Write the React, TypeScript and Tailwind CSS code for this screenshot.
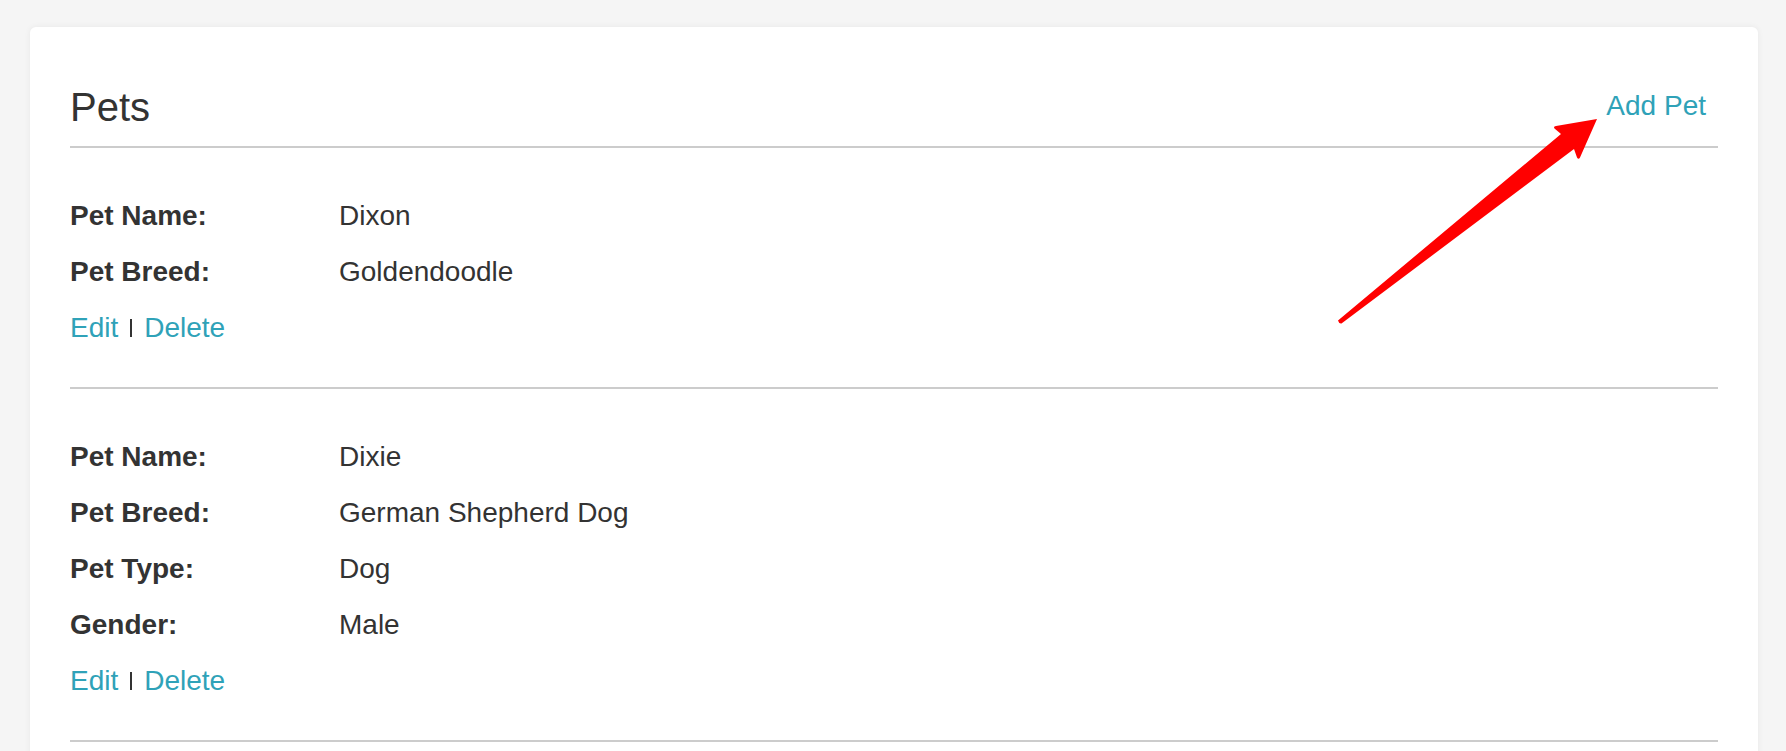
import React from 'react';

type Pet = {
  fields: { label: string; value: string }[];
};

const PETS: Pet[] = [
  {
    fields: [
      { label: 'Pet Name:', value: 'Dixon' },
      { label: 'Pet Breed:', value: 'Goldendoodle' },
    ],
  },
  {
    fields: [
      { label: 'Pet Name:', value: 'Dixie' },
      { label: 'Pet Breed:', value: 'German Shepherd Dog' },
      { label: 'Pet Type:', value: 'Dog' },
      { label: 'Gender:', value: 'Male' },
    ],
  },
];

// 어노테이션 화살표 (빨간색)
function RedArrow() {
  return (
    <svg
      className="absolute left-[1330px] top-[110px] pointer-events-none"
      width="280"
      height="220"
      viewBox="0 0 280 220"
    >
      <path
        d="M8 210.5 L231 24 L224.5 18.5 Q223 16.5 226 16 L267 9 L250 47.5 Q248.5 50 247 47.5 L244 39 L11.5 213.5 Q9 214 8 210.5 Z"
        fill="#ff0000"
      />
    </svg>
  );
}

export default function App() {
  return (
    <div
      className="relative h-screen overflow-hidden bg-[#f5f5f5] pt-[27px] pl-[30px] pr-[28px] text-[#333333]"
      style={{ fontFamily: '"Liberation Sans", Arial, Helvetica, sans-serif' }}
    >
      <div className="rounded-md bg-white px-[40px] pt-[55px] pb-[40px] shadow-[0_0_6px_rgba(0,0,0,0.06)]">
        {/* 헤더 */}
        <div className="flex items-center justify-between border-b-2 border-[#cccccc] pb-[14px]">
          <h1 className="text-[40px] leading-[48px] font-normal">Pets</h1>
          <a href="#" className="mr-[12px] mb-[2px] text-[28px] leading-[48px] text-[#2fa2b8]">
            Add Pet
          </a>
        </div>

        {/* 펫 목록 */}
        {PETS.map((pet, i) => (
          <div key={i} className="border-b-2 border-[#cccccc] pt-[40px] pb-[31px] text-[28px] leading-[56px]">
            {pet.fields.map((f) => (
              <div key={f.label} className="flex">
                <span className="w-[269px] font-bold">{f.label}</span>
                <span>{f.value}</span>
              </div>
            ))}
            <div className="flex items-baseline">
              <a href="#" className="text-[#2fa2b8]">Edit</a>
              <span className="ml-[12px] mr-[12px] inline-block h-[18px] w-[2px] bg-[#333333]" />
              <a href="#" className="text-[#2fa2b8]">Delete</a>
            </div>
          </div>
        ))}
      </div>
      <RedArrow />
    </div>
  );
}
